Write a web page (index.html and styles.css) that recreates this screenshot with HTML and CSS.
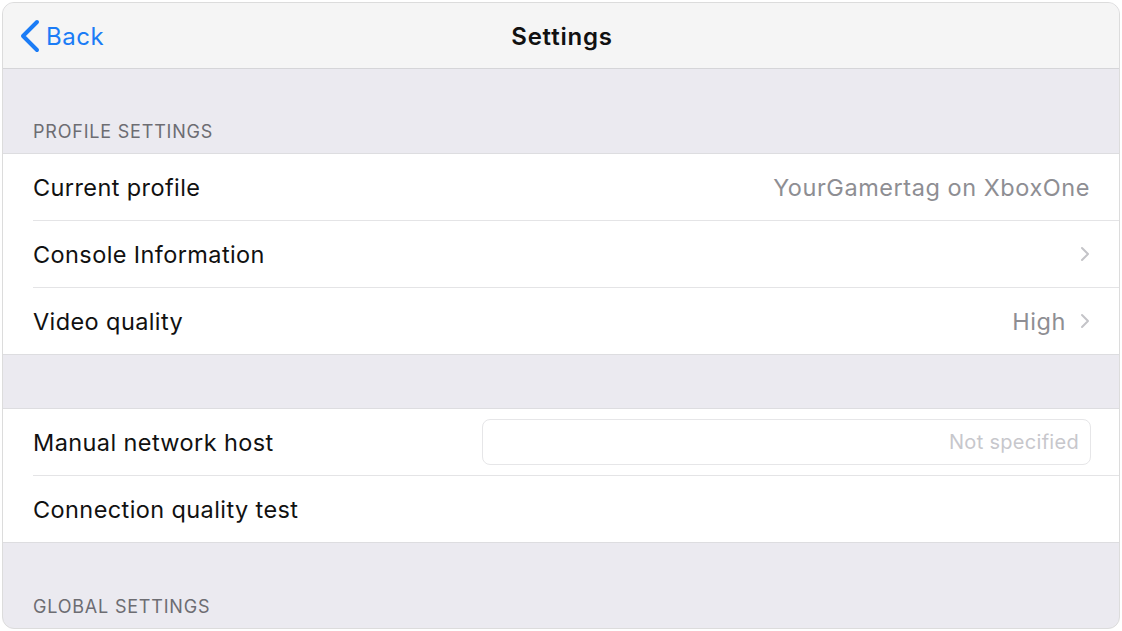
FILE: index.html
```html
<!DOCTYPE html>
<html>
<head>
<meta charset="utf-8">
<link rel="stylesheet" href="styles.css">
</head>
<body>
<div class="frame">
  <header class="navbar">
    <a class="back">
      <svg class="back-chev" width="22" height="34" viewBox="0 0 22 34"><path d="M18 3 L4 17 L18 31" fill="none" stroke="#1b7cf6" stroke-width="4" stroke-linecap="round" stroke-linejoin="round"/></svg>
      <span>Back</span>
    </a>
    <h1 class="title">Settings</h1>
  </header>
  <div class="section-head tall">PROFILE SETTINGS</div>
  <div class="group">
    <div class="row"><span class="label">Current profile</span><span class="value">YourGamertag on XboxOne</span></div>
    <div class="row"><span class="label">Console Information</span><span class="value"><svg class="chev" width="10" height="16" viewBox="0 0 10 16"><path d="M2 2 L8 8 L2 14" fill="none" stroke="#c4c4c8" stroke-width="2" stroke-linecap="round" stroke-linejoin="round"/></svg></span></div>
    <div class="row last"><span class="label">Video quality</span><span class="value">High<svg class="chev" width="10" height="16" viewBox="0 0 10 16"><path d="M2 2 L8 8 L2 14" fill="none" stroke="#c4c4c8" stroke-width="2" stroke-linecap="round" stroke-linejoin="round"/></svg></span></div>
  </div>
  <div class="gap"></div>
  <div class="group">
    <div class="row"><span class="label">Manual network host</span><div class="field">Not specified</div></div>
    <div class="row last"><span class="label">Connection quality test</span></div>
  </div>
  <div class="section-head bottom">GLOBAL SETTINGS</div>
</div>
</body>
</html>
```
FILE: styles.css
```css
* { box-sizing: border-box; }
html, body { margin: 0; padding: 0; background: #ffffff; }
body {
  font-family: Inter, "Noto Sans", "Liberation Sans", sans-serif;
  width: 1122px;
  height: 631px;
  padding: 2px;
}
.frame {
  width: 1118px;
  height: 627px;
  border: 1px solid #dcdcdc;
  border-radius: 12px;
  overflow: hidden;
  background: #ebeaf0;
  display: flex;
  flex-direction: column;
}
.navbar {
  height: 66px;
  flex: none;
  background: #f5f5f5;
  border-bottom: 1px solid #d5d5d8;
  display: flex;
  align-items: center;
  justify-content: center;
  position: relative;
}
.back {
  position: absolute;
  left: 16px;
  top: 16px;
  display: flex;
  align-items: center;
  gap: 5px;
  color: #1b7cf6;
  font-size: 24px;
  letter-spacing: 0.5px;
}
.back span { margin-top: 1px; }
.title {
  margin: 0;
  font-size: 24px;
  font-weight: 600;
  color: #111;
  letter-spacing: 0.8px;
  margin-top: 1px;
  margin-left: 2px;
}
.section-head {
  flex: none;
  color: #6d6d72;
  font-size: 18px;
  letter-spacing: 0.8px;
  padding-left: 30px;
  display: flex;
  align-items: flex-end;
}
.section-head.tall { height: 85px; padding-bottom: 11px; border-bottom: 1px solid #dddde0; }
.section-head.bottom { flex: 1; padding-bottom: 11px; border-top: 1px solid #dddde0; }
.group { background: #fff; flex: none; }
.gap { height: 55px; flex: none; border-top: 1px solid #dddde0; border-bottom: 1px solid #dddde0; }
.row {
  height: 67px;
  display: flex;
  align-items: center;
  justify-content: space-between;
  margin-left: 30px;
  padding-right: 29px;
  border-bottom: 1px solid #e4e4e6;
}
.row.last { height: 66px; border-bottom: none; }
.label { font-size: 23.5px; color: #111; letter-spacing: 0.4px; }
.value {
  font-size: 23.5px;
  color: #8e8e93;
  display: flex;
  align-items: center;
  gap: 14px;
  letter-spacing: 0.55px;
}
.chev { display: block; }
.field {
  width: 609px;
  height: 46px;
  border: 1px solid #e6e6e8;
  border-radius: 8px;
  display: flex;
  align-items: center;
  justify-content: flex-end;
  padding-right: 11px;
  font-size: 20px;
  color: #c7c7cc;
  letter-spacing: 0.3px;
  margin-right: -1px;
}
```
